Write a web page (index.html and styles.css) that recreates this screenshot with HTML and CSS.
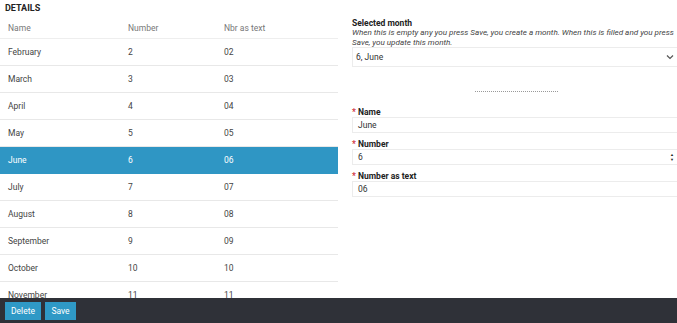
FILE: index.html
```html
<!DOCTYPE html>
<html lang="en">
<head>
  <meta charset="UTF-8" />
  <title>Months</title>
  <link rel="stylesheet" href="styles.css">
</head>
<body>
  <div class="page">
    <div class="list-col">
      <h4 class="title">DETAILS</h4>
      <table class="months">
        <thead>
          <tr><th>Name</th><th>Number</th><th>Nbr as text</th></tr>
        </thead>
        <tbody>
          <tr><td>February</td><td>2</td><td>02</td></tr>
          <tr><td>March</td><td>3</td><td>03</td></tr>
          <tr><td>April</td><td>4</td><td>04</td></tr>
          <tr><td>May</td><td>5</td><td>05</td></tr>
          <tr class="selected"><td>June</td><td>6</td><td>06</td></tr>
          <tr><td>July</td><td>7</td><td>07</td></tr>
          <tr><td>August</td><td>8</td><td>08</td></tr>
          <tr><td>September</td><td>9</td><td>09</td></tr>
          <tr><td>October</td><td>10</td><td>10</td></tr>
          <tr><td>November</td><td>11</td><td>11</td></tr>
        </tbody>
      </table>
    </div>

    <div class="form-col">
      <div class="form-group">
        <label>Selected month</label>
        <p class="hint">When this is empty any you press Save, you create a month. When this is filled and you press<br>Save, you update this month.</p>
        <div class="field select">
          <span>6, June</span>
          <svg width="8" height="6" viewBox="0 0 8 6"><path d="M1 1.5 L4 4.5 L7 1.5" fill="none" stroke="#555" stroke-width="1.2"/></svg>
        </div>
      </div>

      <div class="divider"></div>

      <div class="form-group">
        <label><span class="req">*</span> Name</label>
        <div class="field"><span>June</span></div>
      </div>
      <div class="form-group">
        <label><span class="req">*</span> Number</label>
        <div class="field">
          <span>6</span>
          <span class="spin"><i>▲</i><i>▼</i></span>
        </div>
      </div>
      <div class="form-group">
        <label><span class="req">*</span> Number as text</label>
        <div class="field"><span>06</span></div>
      </div>
    </div>
  </div>

  <div class="footer">
    <button>Delete</button>
    <button>Save</button>
  </div>
</body>
</html>
```

FILE: styles.css
```css
* {
  margin: 0;
  padding: 0;
  box-sizing: border-box;
}

body {
  font-family: Roboto, 'Liberation Sans', sans-serif;
  font-size: 8.5px;
  color: #333;
  background: #fff;
  overflow: hidden;
}

.page {
  display: flex;
  gap: 14px;
}

.list-col {
  width: 338px;
  flex-shrink: 0;
}

.title {
  font-size: 9px;
  font-weight: 700;
  color: #222;
  padding: 3px 0 0 5px;
  height: 13px;
  line-height: 10px;
}

.months {
  width: 100%;
  border-collapse: collapse;
}

.months th {
  text-align: left;
  font-weight: 400;
  color: #777;
  height: 25px;
  padding: 0 8px 5px;
  line-height: 10px;
  vertical-align: bottom;
  border-bottom: 1px solid #eee;
}

.months td {
  height: 27px;
  padding: 0 8px;
  border-bottom: 1px solid #e8e8e8;
  color: #444;
}

.months th:nth-child(1), .months td:nth-child(1) { width: 120px; }
.months th:nth-child(2), .months td:nth-child(2) { width: 96px; }

.months tr.selected td {
  background: #2f96c4;
  color: #fff;
  border-bottom-color: #2f96c4;
}

.form-col {
  flex: 1;
  padding-top: 18px;
  margin-right: -3px;
}

.form-group {
  margin-bottom: 6px;
}

.form-group label {
  display: block;
  font-weight: 700;
  color: #222;
  line-height: 10px;
}

.req {
  color: #d0343f;
}

.hint {
  font-style: italic;
  font-size: 8.1px;
  color: #444;
  line-height: 9.5px;
  white-space: nowrap;
}

.field {
  display: flex;
  align-items: center;
  justify-content: space-between;
  height: 16px;
  border: 1px solid #ececec;
  padding: 0 5px 0 5px;
  color: #333;
}

.field.select {
  height: 20px;
  padding-left: 3px;
}

.spin {
  display: flex;
  flex-direction: column;
  font-size: 4px;
  line-height: 5px;
  color: #222;
}

.spin i {
  font-style: normal;
}

.divider {
  width: 83px;
  margin: 24px auto 15px;
  border-top: 1px dotted #999;
}

.footer {
  position: fixed;
  left: 0;
  right: 0;
  bottom: 0;
  height: 25px;
  background: #2f3138;
  display: flex;
  align-items: center;
  gap: 4px;
  padding: 0 5px;
}

.footer button {
  font-family: Roboto, 'Liberation Sans', sans-serif;
  font-size: 8.5px;
  color: #fff;
  background: #2f99c6;
  border: none;
  height: 18px;
  padding: 0 6px;
  min-width: 31px;
}

.footer button:first-child {
  width: 36px;
}
```
